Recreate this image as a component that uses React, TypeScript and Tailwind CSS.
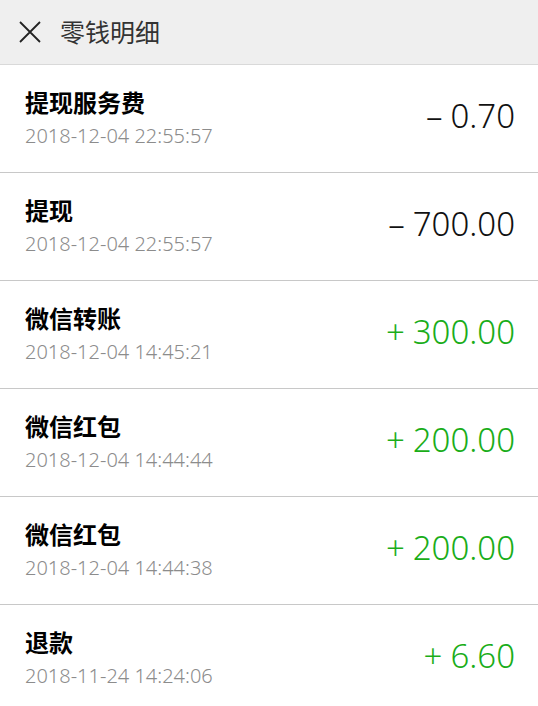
import React from "react";

type Item = { title: string; date: string; amount: string; sign: string; positive: boolean };

const items: Item[] = [
  { title: "提现服务费", date: "2018-12-04 22:55:57", sign: "–", amount: "0.70", positive: false },
  { title: "提现", date: "2018-12-04 22:55:57", sign: "–", amount: "700.00", positive: false },
  { title: "微信转账", date: "2018-12-04 14:45:21", sign: "+", amount: "300.00", positive: true },
  { title: "微信红包", date: "2018-12-04 14:44:44", sign: "+", amount: "200.00", positive: true },
  { title: "微信红包", date: "2018-12-04 14:44:38", sign: "+", amount: "200.00", positive: true },
  { title: "退款", date: "2018-11-24 14:24:06", sign: "+", amount: "6.60", positive: true },
];

const font = { fontFamily: '"Noto Sans", "Noto Sans CJK SC", sans-serif' };

export default function App() {
  return (
    <div className="w-[538px] h-[706px] overflow-hidden bg-white" style={font}>
      <div className="h-[65px] bg-[#efefef] border-b border-[#d9d9d9] flex items-center">
        <svg width="22" height="22" viewBox="0 0 22 22" className="ml-[19px]">
          <path d="M1 1 L21 21 M21 1 L1 21" stroke="#222" strokeWidth="1.8" fill="none" />
        </svg>
        <span className="ml-[19px] text-[25px] text-[#333] leading-none">零钱明细</span>
      </div>
      {items.map((it, i) => (
        <div
          key={i}
          className="h-[108px] border-b border-[#c8c8c8] flex items-center justify-between pl-[25px] pr-[23px]"
        >
          <div className="flex flex-col">
            <span className="text-[24px] font-bold text-black leading-none">{it.title}</span>
            <span className="mt-[11px] text-[20px] font-light text-[#8c8c8c] leading-none">{it.date}</span>
          </div>
          <span
            className={`flex items-center gap-[8px] mb-[6px] text-[33px] font-light leading-none ${it.positive ? "text-[#1aad19]" : "text-[#111]"}`}
          >
            <span>{it.sign}</span>
            <span>{it.amount}</span>
          </span>
        </div>
      ))}
    </div>
  );
}
